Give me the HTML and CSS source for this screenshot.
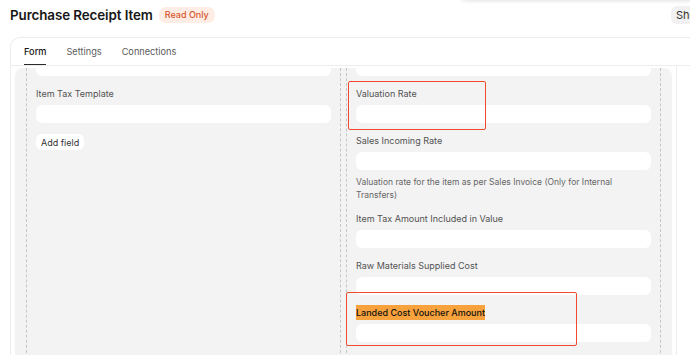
FILE: index.html
```html
<!DOCTYPE html>
<html lang="en">
<head>
  <meta charset="UTF-8">
  <title>Purchase Receipt Item</title>
  <meta name="viewport" content="width=device-width, initial-scale=1.0">
  <link rel="stylesheet" href="styles.css">
</head>
<body>
  <div class="menu-shadow"></div>
  <div class="page">
    <div class="page-head">
      <h1 class="title">Purchase Receipt Item</h1>
      <span class="badge">Read Only</span>
      <button class="head-btn">Show</button>
    </div>

    <div class="card">
      <div class="tabs">
        <div class="tab active">Form</div>
        <div class="tab">Settings</div>
        <div class="tab">Connections</div>
      </div>

      <div class="builder">
        <div class="form-area">
          <div class="section">
            <div class="col">
              <div class="field cut"><div class="input"></div></div>
              <div class="field">
                <div class="label">Item Tax Template</div>
                <div class="input"></div>
              </div>
              <button class="add-field">Add field</button>
            </div>

            <div class="col">
              <div class="field cut"><div class="input"></div></div>
              <div class="field marked">
                <div class="label">Valuation Rate</div>
                <div class="input"></div>
                <div class="mark mark-small"></div>
              </div>
              <div class="field">
                <div class="label">Sales Incoming Rate</div>
                <div class="input"></div>
                <div class="desc">Valuation rate for the item as per Sales Invoice (Only for Internal Transfers)</div>
              </div>
              <div class="field">
                <div class="label">Item Tax Amount Included in Value</div>
                <div class="input"></div>
              </div>
              <div class="field">
                <div class="label">Raw Materials Supplied Cost</div>
                <div class="input"></div>
              </div>
              <div class="field marked">
                <div class="label"><span class="hl">Landed Cost Voucher Amount</span></div>
                <div class="input"></div>
                <div class="mark mark-wide"></div>
              </div>
            </div>
          </div>
        </div>
        <div class="sidebar"></div>
      </div>
    </div>
  </div>
</body>
</html>
```

FILE: styles.css
```css
:root {
  --text: #171717;
  --label: #525252;
  --muted: #666;
  --border: #ededed;
  --section-bg: #f3f3f3;
  --mark: #ee4a2b;
}

body {
  margin: 0;
  background: #fff;
  font-family: Inter, "Noto Sans", sans-serif;
  color: var(--text);
  overflow: hidden;
  height: 355px;
}

.menu-shadow {
  position: absolute;
  top: -22px;
  left: 459px;
  width: 320px;
  height: 22px;
  border-radius: 8px;
  box-shadow: 0 1px 4px rgba(0, 0, 0, 0.12);
}

.page {
  width: 700px;
  padding: 0 0 0 10px;
}

.page-head {
  display: flex;
  align-items: center;
  height: 30px;
  margin-bottom: 7px;
}

.title {
  margin: 0;
  font-size: 13.4px;
  font-weight: 600;
  letter-spacing: -0.1px;
}

.badge {
  margin-left: 6px;
  padding: 2px 6px;
  border-radius: 7px;
  background: #fdede4;
  color: #d8562c;
  font-size: 9px;
  font-weight: 500;
  line-height: 12px;
}

.head-btn {
  margin-left: auto;
  height: 18px;
  padding: 0 5px;
  border: none;
  border-radius: 6px;
  background: #f1f1f1;
  color: #333;
  font-family: inherit;
  font-size: 11px;
}

.card {
  border: 1px solid var(--border);
  border-bottom: none;
  border-radius: 10px 10px 0 0;
}

.tabs {
  display: flex;
  gap: 20px;
  padding-left: 13px;
  border-bottom: 1px solid var(--border);
}

.tab {
  height: 27px;
  line-height: 28px;
  font-size: 9.2px;
  color: #5c5c5c;
}

.tab.active {
  color: var(--text);
  font-weight: 500;
  box-shadow: inset 0 -1px #2a2a2a;
}

.builder {
  display: flex;
}

.form-area {
  width: 657px;
  padding: 2px 4px 0 4px;
  border-right: 1px solid var(--border);
}

.sidebar {
  flex: 1;
}

.section {
  display: flex;
  gap: 5px;
  height: 300px;
  padding: 0 11px;
  background: var(--section-bg);
  border-radius: 8px 8px 0 0;
  overflow: hidden;
}

.col {
  flex: 1;
  padding: 0 9px;
  border-left: 1px dashed #c6c6c6;
  border-right: 1px dashed #c6c6c6;
}

.field {
  margin-bottom: 11px;
}

.field.cut {
  margin-top: -10px;
}

.field.marked {
  position: relative;
}

.label {
  font-size: 9px;
  line-height: 14px;
  margin-bottom: 4px;
  color: var(--label);
}

.hl {
  background: #f7a23c;
  color: #111;
  font-weight: 500;
  padding: 2px 0;
}

.input {
  height: 18px;
  border-radius: 6px;
  background: #fff;
}

.desc {
  margin-top: 6px;
  margin-bottom: -1px;
  font-size: 8.5px;
  line-height: 13px;
  color: var(--muted);
}

.add-field {
  display: block;
  height: 16px;
  padding: 0 5px;
  border: none;
  border-radius: 6px;
  background: #fff;
  color: #333;
  font-family: inherit;
  font-size: 9px;
}

.mark {
  position: absolute;
  border: 1.5px solid var(--mark);
  border-radius: 2px;
}

.mark-small {
  left: -8px;
  top: -6px;
  width: 136px;
  height: 47px;
}

.mark-wide {
  left: -10px;
  top: -14px;
  width: 229px;
  height: 52px;
}
```
